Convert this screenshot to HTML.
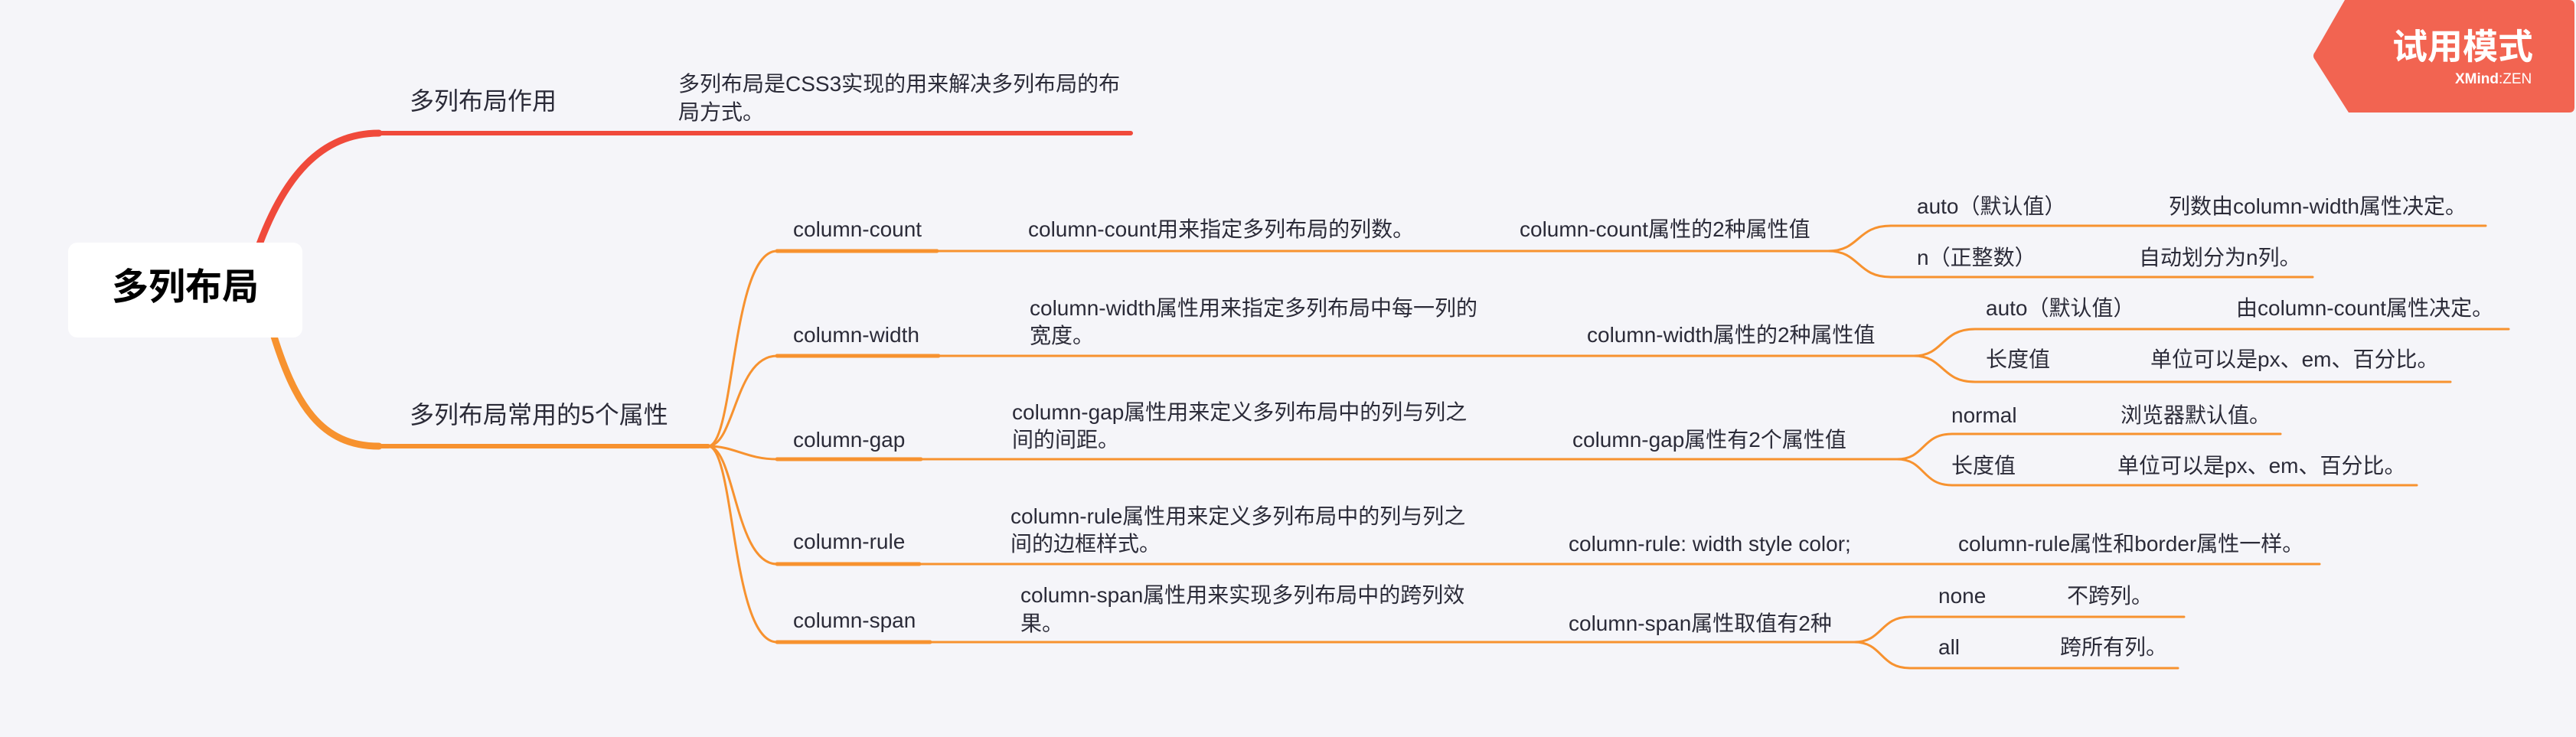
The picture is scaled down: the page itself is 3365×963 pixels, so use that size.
<!DOCTYPE html>
<html><head><meta charset="utf-8"><style>
html,body{margin:0;padding:0}
body{width:3365px;height:963px;background:#F5F5F9;position:relative;overflow:hidden;font-family:"Liberation Sans","Noto Sans CJK SC",sans-serif;color:#2b2b38}
.t{position:absolute;font-size:28px;line-height:36px;white-space:nowrap}
.m{font-size:32px;line-height:40px}
svg{position:absolute;left:0;top:0}
</style></head><body>
<svg width="3365" height="963" fill="none" stroke-linecap="round">
 <!-- root branches -->
 <path d="M335 330 C 370 230, 420 174, 495 174 L1477 174" stroke="#F04A3B" stroke-width="6"/>
 <path d="M335 330 C 370 230, 420 174, 495 174" stroke="#F04A3B" stroke-width="9"/>
 <path d="M355 430 C 385 530, 420 583, 495 583 L925 583" stroke="#F7922F" stroke-width="6"/>
 <path d="M355 430 C 385 530, 420 583, 495 583" stroke="#F7922F" stroke-width="9"/>
 <g stroke="#F7922F" stroke-width="3">
  <path d="M925 583 C 960 583, 955 328, 1015 328"/>
  <path d="M925 583 C 960 583, 960 465, 1015 465"/>
  <path d="M925 583 C 960 583, 975 600, 1015 600"/>
  <path d="M925 583 C 960 583, 960 737, 1015 737"/>
  <path d="M925 583 C 960 583, 955 839, 1015 839"/>
  <path d="M1015 328 L2388 328 M2388 328 C 2430 328, 2425 295, 2470 295 L3247 295 M2388 328 C 2430 328, 2425 362, 2470 362 L3021 362"/>
  <path d="M1015 465 L2500 465 M2500 465 C 2540 465, 2535 430, 2580 430 L3277 430 M2500 465 C 2540 465, 2535 499, 2580 499 L3201 499"/>
  <path d="M1015 600 L2478 600 M2478 600 C 2515 600, 2510 567, 2550 567 L2979 567 M2478 600 C 2515 600, 2510 634, 2550 634 L3157 634"/>
  <path d="M1015 737 L3030 737"/>
  <path d="M1015 839 L2422 839 M2422 839 C 2460 839, 2455 806, 2495 806 L2853 806 M2422 839 C 2460 839, 2455 873, 2495 873 L2845 873"/>
 </g>
 <g stroke="#F7922F" stroke-width="5">
  <path d="M1015 328 L1224 328 M1015 465 L1226 465 M1015 600 L1203 600 M1015 737 L1201 737 M1015 839 L1215 839"/>
 </g>
 <path d="M3063 0 L3356 0 Q3363 0 3363 7 L3363 140 Q3363 147 3356 147 L3068 147 L3024 78 Q3020 73 3024 68 Z" fill="#F26451"/>
</svg>
<div style="position:absolute;left:89px;top:317px;width:306px;height:124px;background:#fff;border-radius:12px"></div>
<div class="t" style="left:146px;top:348px;font-size:48px;line-height:56px;font-weight:bold;color:#000">多列布局</div>
<div class="t" style="left:3125px;top:34px;font-size:46px;line-height:54px;color:#fff;font-weight:bold">试用模式</div>
<div class="t" style="left:3207px;top:93px;font-size:19px;line-height:22px;color:#fff"><b>XMind</b>:ZEN</div>

<div class="t m" style="left:535px;top:112px">多列布局作用</div>
<div class="t" style="left:886px;top:92px">多列布局是CSS3实现的用来解决多列布局的布</div>
<div class="t" style="left:886px;top:129px">局方式。</div>
<div class="t m" style="left:535px;top:522px">多列布局常用的5个属性</div>

<div class="t" style="left:1036px;top:282px">column-count</div>
<div class="t" style="left:1343px;top:282px">column-count用来指定多列布局的列数。</div>
<div class="t" style="left:1985px;top:282px">column-count属性的2种属性值</div>
<div class="t" style="left:2504px;top:252px">auto（默认值）</div>
<div class="t" style="left:2833px;top:252px">列数由column-width属性决定。</div>
<div class="t" style="left:2504px;top:319px">n（正整数）</div>
<div class="t" style="left:2794px;top:319px">自动划分为n列。</div>

<div class="t" style="left:1036px;top:420px">column-width</div>
<div class="t" style="left:1345px;top:385px">column-width属性用来指定多列布局中每一列的</div>
<div class="t" style="left:1345px;top:421px">宽度。</div>
<div class="t" style="left:2073px;top:420px">column-width属性的2种属性值</div>
<div class="t" style="left:2594px;top:385px">auto（默认值）</div>
<div class="t" style="left:2921px;top:385px">由column-count属性决定。</div>
<div class="t" style="left:2594px;top:452px">长度值</div>
<div class="t" style="left:2809px;top:452px">单位可以是px、em、百分比。</div>

<div class="t" style="left:1036px;top:557px">column-gap</div>
<div class="t" style="left:1322px;top:521px">column-gap属性用来定义多列布局中的列与列之</div>
<div class="t" style="left:1322px;top:557px">间的间距。</div>
<div class="t" style="left:2054px;top:557px">column-gap属性有2个属性值</div>
<div class="t" style="left:2549px;top:525px">normal</div>
<div class="t" style="left:2770px;top:525px">浏览器默认值。</div>
<div class="t" style="left:2549px;top:591px">长度值</div>
<div class="t" style="left:2766px;top:591px">单位可以是px、em、百分比。</div>

<div class="t" style="left:1036px;top:690px">column-rule</div>
<div class="t" style="left:1320px;top:657px">column-rule属性用来定义多列布局中的列与列之</div>
<div class="t" style="left:1320px;top:693px">间的边框样式。</div>
<div class="t" style="left:2049px;top:693px">column-rule: width style color;</div>
<div class="t" style="left:2558px;top:693px">column-rule属性和border属性一样。</div>

<div class="t" style="left:1036px;top:793px">column-span</div>
<div class="t" style="left:1333px;top:760px">column-span属性用来实现多列布局中的跨列效</div>
<div class="t" style="left:1333px;top:797px">果。</div>
<div class="t" style="left:2049px;top:797px">column-span属性取值有2种</div>
<div class="t" style="left:2532px;top:761px">none</div>
<div class="t" style="left:2700px;top:761px">不跨列。</div>
<div class="t" style="left:2532px;top:828px">all</div>
<div class="t" style="left:2691px;top:828px">跨所有列。</div>
</body></html>
